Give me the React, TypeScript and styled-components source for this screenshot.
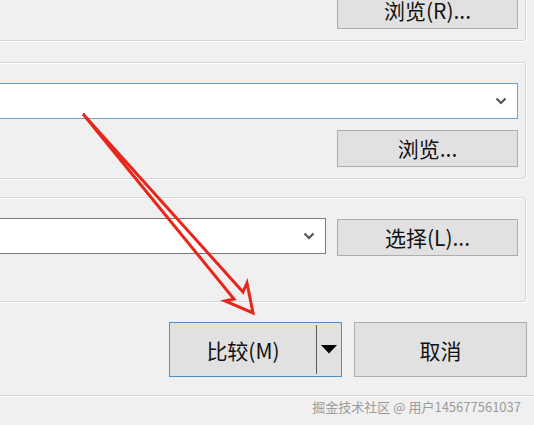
import React from "react";
import styled, { createGlobalStyle } from "styled-components";

const Global = createGlobalStyle`
  html, body { margin: 0; padding: 0; background: #f0f0f0; }
  body { overflow: hidden; font-family: "Noto Sans CJK SC", "Noto Sans", sans-serif; }
`;

const Page = styled.div`
  position: relative;
  width: 534px;
  height: 425px;
  overflow: hidden;
  background: #f0f0f0;
`;

const Main = styled.div`
  display: flex;
  flex-direction: column;
  margin-left: -40px;
  width: 567px;
`;

const Group = styled.div<{ $top: number; $bottom: number }>`
  margin-top: ${(p) => p.$top}px;
  margin-right: 1px;
  border: 1px solid #d6d6d6;
  border-radius: 3px;
  box-shadow: 1px 1px 0 #ffffff, inset 1px 1px 0 #ffffff;
  padding: 20px 7px ${(p) => p.$bottom}px 7px;
  display: flex;
  flex-direction: column;
  gap: 11px;
`;

const Row = styled.div`
  display: flex;
  align-items: flex-start;
  justify-content: flex-end;
  gap: 11px;
`;

const Button = styled.div<{ $offset?: number }>`
  box-sizing: border-box;
  width: 181px;
  height: 37px;
  margin-top: ${(p) => p.$offset ?? 0}px;
  background: #e1e1e1;
  border: 1px solid #adadad;
  display: flex;
  align-items: center;
  justify-content: center;
  font-size: 21px;
  color: #111;
  line-height: 1;
  flex-shrink: 0;
`;

const Combo = styled.div<{ $width?: number; $focus?: boolean }>`
  box-sizing: border-box;
  ${(p) => (p.$width ? `width: ${p.$width}px;` : "align-self: stretch;")}
  height: 36px;
  background: #ffffff;
  border: 1px solid ${(p) => (p.$focus ? "#6aa5d2" : "#7a7a7a")};
  display: flex;
  align-items: center;
  justify-content: flex-end;
  padding-right: 10px;
  flex-shrink: 0;
`;

const Chevron = () => (
  <svg width="12" height="8" viewBox="0 0 12 8">
    <path d="M1.5 1.5 L6 6 L10.5 1.5" stroke="#555" strokeWidth="2.2" fill="none" />
  </svg>
);

const Actions = styled.div`
  margin-top: 20px;
  display: flex;
  justify-content: flex-end;
  gap: 12px;
`;

const BigButton = styled.div<{ $default?: boolean }>`
  box-sizing: border-box;
  width: 173px;
  height: 55px;
  background: #e1e1e1;
  border: 1px solid ${(p) => (p.$default ? "#4d8fc6" : "#adadad")};
  display: flex;
  align-items: stretch;
  font-size: 21px;
  color: #111;
`;

const BigLabel = styled.div`
  flex: 1;
  display: flex;
  align-items: center;
  justify-content: center;
`;

const Split = styled.div`
  width: 24px;
  margin: 2px 0;
  border-left: 1px solid #5a5a5a;
  display: flex;
  align-items: center;
  justify-content: center;
`;

const Footer = styled.div`
  margin-top: 18px;
  border-top: 1px solid #d9d9d9;
  box-shadow: inset 0 1px 0 #fafafa;
  display: flex;
  justify-content: flex-end;
  padding: 2px 13px 0 0;
  font-size: 13px;
  line-height: 18px;
  color: #9b9b9b;
`;

const Overlay = styled.svg`
  position: absolute;
  left: 0;
  top: 0;
  pointer-events: none;
`;

export default function App() {
  return (
    <Page>
      <Global />
      <Main>
        <Group $top={-29} $bottom={11}>
          <Row>
            <Button>浏览(R)...</Button>
          </Row>
        </Group>
        <Group $top={21} $bottom={11}>
          <Combo $focus>
            <Chevron />
          </Combo>
          <Row>
            <Button>浏览...</Button>
          </Row>
        </Group>
        <Group $top={18} $bottom={45}>
          <Row>
            <Combo $width={326 + 40 - 8}>
              <Chevron />
            </Combo>
            <Button $offset={1}>选择(L)...</Button>
          </Row>
        </Group>
        <Actions>
          <BigButton $default>
            <BigLabel>比较(M)</BigLabel>
            <Split>
              <svg width="16" height="9" viewBox="0 0 16 9">
                <path d="M0 0 L16 0 L8 8.5 Z" fill="#000" />
              </svg>
            </Split>
          </BigButton>
          <BigButton>
            <BigLabel>取消</BigLabel>
          </BigButton>
        </Actions>
      </Main>
      <Footer>掘金技术社区 @ 用户145677561037</Footer>
      <Overlay width="534" height="425" viewBox="0 0 534 425">
        <polygon
          points="83,114 243,292 247,283 253,313 225,301 234,299"
          fill="none"
          stroke="#e8261b"
          strokeWidth="3"
          strokeLinejoin="miter"
        />
      </Overlay>
    </Page>
  );
}
